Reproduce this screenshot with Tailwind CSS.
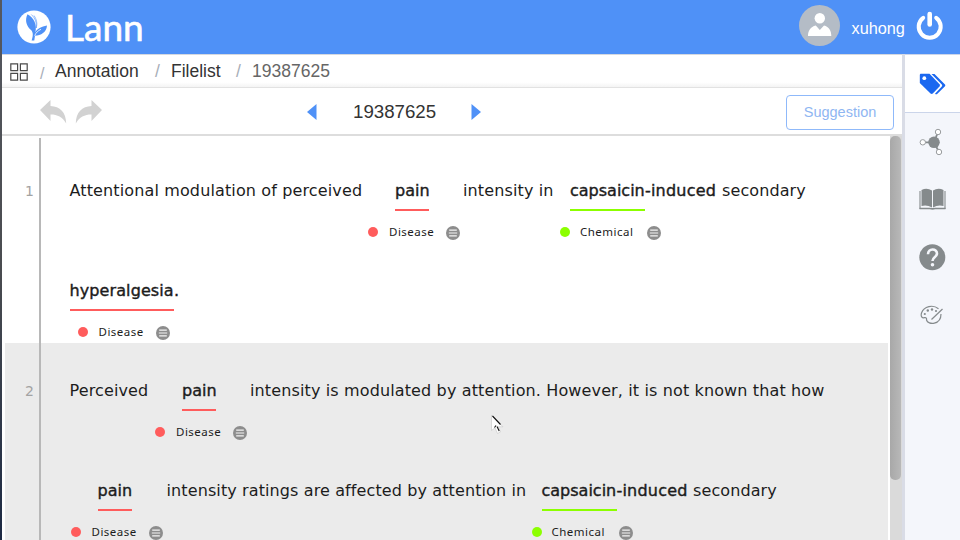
<!DOCTYPE html>
<html lang="en">
<head>
<meta charset="utf-8">
<title>Lann</title>
<script src="https://cdn.jsdelivr.net/npm/@tailwindcss/browser@4"></script>
</head>
<body class="w-[960px] h-[540px] overflow-hidden bg-white font-['Liberation_Sans',sans-serif]">
<svg class="hidden">
  <symbol id="menu" viewBox="0 0 14 14"><circle cx="7" cy="7" r="7" fill="#8d8d8d"/><path d="M3.200 4.200h7.600M2.800 7h8.400M3.200 9.800h7.600" stroke="#f4f4f4" stroke-width="1.200" fill="none"/></symbol>
</svg>
<div class="flex w-[960px] h-[540px]">
  <div class="w-[2px] shrink-0 bg-linear-to-b from-[#555860] via-[#4a4c50] to-[#1d2a44]"></div>
  <div class="flex flex-col w-[958px]">
    <header class="h-[54px] shrink-0 bg-[#4f91f7] flex items-center pl-[15px] text-white">
      <svg class="w-[34px] h-[34px]" viewBox="0 0 34 34"><circle cx="17" cy="17" r="16.600" fill="#fff"/><path d="M10.500 4.200C7.500 10 9.500 16.500 14.300 20.300C16.500 23 16 26.500 14.600 30.500L17.300 30.500C17.600 28.500 17.700 27 18 25.700C24 25.500 29.500 22.500 30 15.600C24.500 16.500 19.800 19 18.300 22.600C20.300 14.500 17 7.500 10.500 4.200Z" fill="#4f91f7"/><path d="M14.300 4.500C18.500 8.500 19.800 13 19.200 18M17 5.500C19.700 9.500 20.500 13.500 19.200 18" fill="none" stroke="#4f91f7" stroke-width=".6"/><path d="M17.700 25.800C18.600 22.800 21 20.800 24 19.300" fill="none" stroke="#fff" stroke-width=".8"/></svg>
      <div class="ml-[14px] -mt-[1px] w-[100px] text-[37px] leading-[40px] font-['Lato',sans-serif] [-webkit-text-stroke:0.6px]">Lann</div>
      <svg class="ml-[634px] -mt-[3px] w-[41px] h-[41px] shrink-0" viewBox="0 0 41 41"><circle cx="20.500" cy="20.500" r="20.500" fill="#b4bcc6"/><circle cx="20.800" cy="13.200" r="5.200" fill="#fff"/><path d="M9 31C9 25.500 11.500 21.600 16.800 20.400L20.800 25L25 20.400C30 21.600 32.300 25.500 32.300 31Z" fill="#fff"/></svg>
      <span class="ml-[11.500px] mt-[2px] w-[54px] text-[16.300px]">xuhong</span>
      <svg class="ml-[10.500px] -mt-[4px] w-[28px] h-[30px] shrink-0" viewBox="0 0 28 30"><path d="M7.200 7.800A11 11 0 1 0 20.200 7.800" fill="none" stroke="#fff" stroke-width="4" stroke-linecap="round"/><path d="M13.700 4v10.500" stroke="#fff" stroke-width="4.600" stroke-linecap="round"/></svg>
    </header>
    <div class="flex h-[486px]">
      <main class="w-[900px] border-t border-[#d4d8e0] flex flex-col">
        <nav class="h-[33px] shrink-0 flex items-center pl-[8px] text-[17.500px] text-[#333] border-b border-[#e2e2e2] bg-linear-to-b from-white from-85% to-[#f4f4f4]">
          <svg class="w-[18px] h-[18px] mt-[2px]" viewBox="0 0 18 18" fill="none" stroke="#4a4a4a" stroke-width="1.200"><path d="M.8.8h6.800v6.800H.8zM10.400.8h6.800v6.800h-6.800zM.8 10.400h6.800v6.800H.8zM10.400 10.400h6.800v6.800h-6.800z"/></svg>
          <span class="ml-[12px] mt-[5px] w-[15px] text-[#a8aeb8] text-[16px]">/</span>
          <span class="w-[100px] whitespace-nowrap">Annotation</span>
          <span class="w-[16px] text-[#a8aeb8]">/</span>
          <span class="w-[65px] whitespace-nowrap">Filelist</span>
          <span class="w-[16px] text-[#a8aeb8]">/</span>
          <span class="text-[#666]">19387625</span>
        </nav>
        <div class="h-[48px] shrink-0 flex items-center border-b-2 border-[#ddd]">
          <svg class="ml-[37px] mt-[1px] w-[64px] h-[25px]" viewBox="0 0 64 25" fill="#d2d2d2"><path d="M1 11L11.500 1V7C21 7.500 27 13 27.200 24.500C23.500 18 18.500 15.500 11.500 15.500V22Z"/><path d="M63 11L52.500 1V7C43 7.500 37 13 36.800 24.500C40.500 18 45.500 15.500 52.500 15.500V22Z"/></svg>
          <svg class="ml-[204px] mt-[2px] w-[10px] h-[16px]" viewBox="0 0 10 16"><path d="M9.500 0v16L0 8z" fill="#4f91f7"/></svg>
          <span class="ml-[36px] mt-[2px] w-[84px] text-[18.700px] text-[#333]">19387625</span>
          <svg class="ml-[34px] mt-[2px] w-[10px] h-[16px]" viewBox="0 0 10 16"><path d="M.5 0v16L10 8z" fill="#4f91f7"/></svg>
          <div class="ml-[305px] mt-[3px] w-[108px] h-[35px] rounded border border-[#8fb9fa] text-[#8fb6f2] text-[14.500px] flex items-center justify-center">Suggestion</div>
        </div>
        <div class="relative flex h-[404px] overflow-hidden">
          <div class="w-[888px] pt-[7px] text-[16px] font-['DejaVu_Sans',sans-serif] text-[#1c1c1c] whitespace-nowrap">
            <section class="ml-[3px] w-[883px] h-[200px] flex">
              <div class="w-[33px] pt-[38px] pr-[4px] text-right text-[14px] leading-[20px] text-[#a3a3a3]">1</div>
              <div class="pl-[31.500px]">
                <div class="h-[100px] pt-[38px] flex leading-[20px]">
                  <span class="w-[298.500px] tracking-[0.13px]">Attentional modulation of perceived</span>
                  <div class="w-[95px]">
                    <div class="ml-[27px] w-[34px] h-[30px] border-b-2 border-[#ff5c5c] [-webkit-text-stroke:0.4px]">pain</div>
                    <div class="mt-[11px] flex items-center text-[11.500px] tracking-[0.5px]"><i class="w-[10px] h-[10px] rounded-full bg-[#ff5c5c]"></i><span class="ml-[11px] w-[57px] font-['Noto_Sans',sans-serif]">Disease</span><svg class="w-[14px] h-[14px] mt-[1px]"><use href="#menu"/></svg></div>
                  </div>
                  <span class="w-[97px] tracking-[0.13px]">intensity in</span>
                  <div class="w-[85px]">
                    <div class="ml-[10px] w-[75px] h-[30px] border-b-2 border-[#8cff00] [-webkit-text-stroke:0.4px]">capsaicin</div>
                    <div class="mt-[11px] flex items-center text-[11.500px] tracking-[0.5px]"><i class="w-[10px] h-[10px] shrink-0 rounded-full bg-[#8cff00]"></i><span class="ml-[10px] w-[67px] shrink-0 font-['Noto_Sans',sans-serif]">Chemical</span><svg class="w-[14px] h-[14px] shrink-0 mt-[1px]"><use href="#menu"/></svg></div>
                  </div>
                  <span class="w-[77px] tracking-[0.2px] [-webkit-text-stroke:0.4px]">-induced</span>
                  <span class="tracking-[0.1px]">secondary</span>
                </div>
                <div class="h-[100px] pt-[38px] flex leading-[20px]">
                  <div class="w-[104.500px]">
                    <div class="h-[30px] border-b-2 border-[#ff5c5c] tracking-[0.1px] [-webkit-text-stroke:0.4px]">hyperalgesia</div>
                    <div class="mt-[11px] ml-[8px] flex items-center text-[11.500px] tracking-[0.5px]"><i class="w-[10px] h-[10px] rounded-full bg-[#ff5c5c]"></i><span class="ml-[11px] w-[57px] font-['Noto_Sans',sans-serif]">Disease</span><svg class="w-[14px] h-[14px] mt-[1px]"><use href="#menu"/></svg></div>
                  </div>
                  <span class="[-webkit-text-stroke:0.4px]">.</span>
                </div>
              </div>
            </section>
            <section class="ml-[3px] w-[883px] h-[200px] flex bg-[#ebebeb]">
              <div class="w-[33px] pt-[38px] pr-[4px] text-right text-[14px] leading-[20px] text-[#a3a3a3]">2</div>
              <div class="pl-[31.500px]">
                <div class="h-[100px] pt-[38px] flex leading-[20px]">
                  <span class="w-[85.500px] tracking-[0.13px]">Perceived</span>
                  <div class="w-[95px]">
                    <div class="ml-[27px] w-[34px] h-[30px] border-b-2 border-[#ff5c5c] [-webkit-text-stroke:0.4px]">pain</div>
                    <div class="mt-[11px] flex items-center text-[11.500px] tracking-[0.5px]"><i class="w-[10px] h-[10px] rounded-full bg-[#ff5c5c]"></i><span class="ml-[11px] w-[57px] font-['Noto_Sans',sans-serif]">Disease</span><svg class="w-[14px] h-[14px] mt-[1px]"><use href="#menu"/></svg></div>
                  </div>
                  <span class="tracking-[0.13px]">intensity is modulated by attention. However, it is not known that how</span>
                </div>
                <div class="h-[100px] pt-[38px] flex leading-[20px]">
                  <div class="ml-[1px] w-[96px]">
                    <div class="ml-[27px] w-[34px] h-[30px] border-b-2 border-[#ff5c5c] [-webkit-text-stroke:0.4px]">pain</div>
                    <div class="mt-[11px] flex items-center text-[11.500px] tracking-[0.5px]"><i class="w-[10px] h-[10px] rounded-full bg-[#ff5c5c]"></i><span class="ml-[11px] w-[57px] font-['Noto_Sans',sans-serif]">Disease</span><svg class="w-[14px] h-[14px] mt-[1px]"><use href="#menu"/></svg></div>
                  </div>
                  <span class="w-[365px] tracking-[0.11px]">intensity ratings are affected by attention in</span>
                  <div class="w-[85px]">
                    <div class="ml-[10px] w-[75px] h-[30px] border-b-2 border-[#8cff00] [-webkit-text-stroke:0.4px]">capsaicin</div>
                    <div class="mt-[11px] flex items-center text-[11.500px] tracking-[0.5px]"><i class="w-[10px] h-[10px] shrink-0 rounded-full bg-[#8cff00]"></i><span class="ml-[10px] w-[67px] shrink-0 font-['Noto_Sans',sans-serif]">Chemical</span><svg class="w-[14px] h-[14px] shrink-0 mt-[1px]"><use href="#menu"/></svg></div>
                  </div>
                  <span class="w-[76.500px] tracking-[0.2px] [-webkit-text-stroke:0.4px]">-induced</span>
                  <span class="tracking-[0.1px]">secondary</span>
                </div>
              </div>
            </section>
          </div>
          <div class="w-[12px] bg-[#dadada]"><div class="w-[11px] h-[344px] rounded-[5px] bg-linear-to-r from-[#a8a8a8] to-[#b8b8b8]"></div></div>
          <div class="absolute left-[37px] top-[2px] w-[2px] h-[402px] bg-[#b8b8b8]"></div>
          <svg class="absolute left-[487px] top-[277px] w-[18px] h-[24px]" viewBox="0 0 18 24"><path d="M2.500 2V17.500L6 14.800L8.500 20.500L11.500 19L9.200 13.800H14Z" fill="#fff" stroke="#ccc" stroke-width=".7"/><path d="M3.500 3L11.500 11.500M5.500 14.500L7 12.500M8 13.500L10.200 18" fill="none" stroke="#111" stroke-width="1.100"/></svg>
        </div>
      </main>
      <aside class="w-[58px] border-l-3 border-[#d9dce6] bg-[#f4f6fb] flex flex-col">
        <div class="h-[59px] shrink-0 bg-white border-t border-b border-[#cbd5ea] flex items-center justify-center">
          <svg class="w-[27px] h-[22px] mt-[1px] mr-[1px]" viewBox="0 0 27 22"><path d="M1.500.8H10.500L20.500 11.200Q21.500 12.500 20.500 13.600L13.800 20.600Q12.700 21.500 11.500 20.600L.8 10V2Q.8 1 1.500.8Z" fill="#1b68f0"/><circle cx="5.300" cy="5.200" r="1.900" fill="#fff"/><path d="M12.500 1H15.500L26 11.500Q26.700 12.400 26 13.200L18.400 20.800Q17.200 21.800 16 20.800L22.800 13.500Q23.700 12.400 22.800 11.400Z" fill="#1b68f0"/></svg>
        </div>
        <svg class="ml-[14px] mt-[15px] w-[28px] h-[28px] shrink-0" viewBox="0 0 28 28"><path d="M4 14.300H15L19 4M15 14.300L20 24" fill="none" stroke="#858a8c" stroke-width="1.800"/><circle cx="15" cy="14.300" r="5.800" fill="#858a8c"/><g fill="#fff" stroke="#9a9d9f" stroke-width="1"><circle cx="3.800" cy="14.300" r="2.700"/><circle cx="19" cy="4" r="2.700"/><circle cx="20" cy="24" r="2.700"/></g></svg>
        <svg class="ml-[13.500px] mt-[32px] w-[27px] h-[22px] shrink-0" viewBox="0 0 27 22"><path d="M1 3v17.500H26V3" fill="none" stroke="#858a8c" stroke-width="1.100"/><path d="M2.500 2Q8-.5 13 2.500V19.500Q8 16.500 2.500 18ZM14 2.500Q19-.5 24.500 2V18Q19 16.500 14 19.500Z" fill="#858a8c"/><path d="M.5 20.500H11L13.500 21L16 20.500H26.500" fill="none" stroke="#858a8c" stroke-width="1.600"/></svg>
        <svg class="ml-[14px] mt-[34px] w-[27px] h-[27px] shrink-0" viewBox="0 0 27 27"><circle cx="13.300" cy="13.300" r="13" fill="#858a8c"/><path d="M9 10.200C9 4 18 4 18 9.600C18 13 13.500 13 13.500 17" fill="none" stroke="#f4f6fb" stroke-width="2.600"/><circle cx="13.500" cy="20.800" r="1.800" fill="#f4f6fb"/></svg>
        <svg class="ml-[15px] mt-[34px] w-[24px] h-[20px] shrink-0" viewBox="0 0 24 20" fill="none" stroke="#858a8c" stroke-width="1.200"><path d="M18.500 3.800C13 -.8 4 1.200 1.500 8C.5 11.500 2 13.200 4.500 12.700C6.500 12.300 6.800 13.700 6.500 15C8 20.500 21 20 21 9"/><path d="M22.500 4L11.500 14.500"/><g fill="#858a8c" stroke="none"><circle cx="4.800" cy="9" r="1.100"/><circle cx="7.800" cy="5.500" r="1.200"/><circle cx="12" cy="4.500" r="1.200"/><circle cx="16" cy="6" r="1.100"/></g></svg>
      </aside>
    </div>
  </div>
</div>
</body>
</html>
